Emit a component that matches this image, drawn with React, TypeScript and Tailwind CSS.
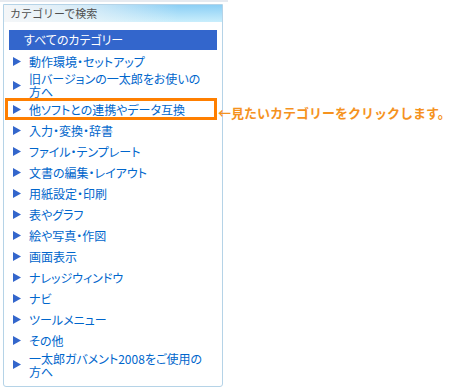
const items: { label: string[]; h: string; highlight?: boolean }[] = [
  { label: ["動作環境・セットアップ"], h: "h-[22px]" },
  { label: ["旧バージョンの一太郎をお使いの", "方へ"], h: "h-[26px]" },
  { label: ["他ソフトとの連携やデータ互換"], h: "h-[22px]", highlight: true },
  { label: ["入力・変換・辞書"], h: "h-[21px]" },
  { label: ["ファイル・テンプレート"], h: "h-[21px]" },
  { label: ["文書の編集・レイアウト"], h: "h-[21px]" },
  { label: ["用紙設定・印刷"], h: "h-[21px]" },
  { label: ["表やグラフ"], h: "h-[21px]" },
  { label: ["絵や写真・作図"], h: "h-[21px]" },
  { label: ["画面表示"], h: "h-[21px]" },
  { label: ["ナレッジウィンドウ"], h: "h-[21px]" },
  { label: ["ナビ"], h: "h-[21px]" },
  { label: ["ツールメニュー"], h: "h-[21px]" },
  { label: ["その他"], h: "h-[21px]" },
  { label: ["一太郎ガバメント2008をご使用の", "方へ"], h: "h-[27px]" },
];

const Arrow = () => (
  <svg width="8" height="9" viewBox="0 0 8 9" className="shrink-0">
    <polygon points="0,0 8,4.5 0,9" fill="#3366cc" />
  </svg>
);

export default function App() {
  return (
    <div className="relative w-[460px] h-[391px] overflow-hidden bg-white font-['Noto_Sans_CJK_JP',sans-serif]">
      <div className="h-[2px] w-[228px] bg-[#e6eaf0]" />
      <div className="mt-[2px] ml-[3px] w-[220px] h-[383px] border border-[#b5d3e7] rounded-b-[3px]">
        <div className="h-[17px] pl-[6px] text-[11px] leading-[17px] text-[#505050] bg-[linear-gradient(to_right,rgba(244,246,248,1)_0%,rgba(244,246,248,0.7)_35%,rgba(244,246,248,0)_80%),linear-gradient(to_bottom,#8ccff5,#c9eefc)]">
          カテゴリーで検索
        </div>
        <div className="mt-[8px] ml-[5px] w-[208px] h-[20px] bg-[#3366cc] pl-[15px] text-[12px] leading-[20px] text-white [font-feature-settings:'palt']">
          すべてのカテゴリー
        </div>
        <ul className="text-[12px] leading-[13px] text-[#0066cc] [font-feature-settings:'palt']">
          {items.map((it) =>
            it.highlight ? (
              <li
                key={it.label[0]}
                className={`${it.h} ml-[1px] w-[212px] flex items-center gap-[8px] border-[3px] border-[#ff7f00] pl-[5px] whitespace-nowrap`}
              >
                <Arrow />
                <span>{it.label[0]}</span>
              </li>
            ) : (
              <li
                key={it.label[0]}
                className={`${it.h} flex items-center gap-[8px] pl-[9px] whitespace-nowrap`}
              >
                <Arrow />
                <span>
                  {it.label.map((l, i) => (
                    <span key={i} className="block">
                      {l}
                    </span>
                  ))}
                </span>
              </li>
            )
          )}
        </ul>
      </div>
      <div className="absolute left-[218px] top-[106px] text-[13px] leading-[14px] font-bold text-[#f5921e] whitespace-nowrap">
        ←見たいカテゴリーをクリックします。
      </div>
    </div>
  );
}
